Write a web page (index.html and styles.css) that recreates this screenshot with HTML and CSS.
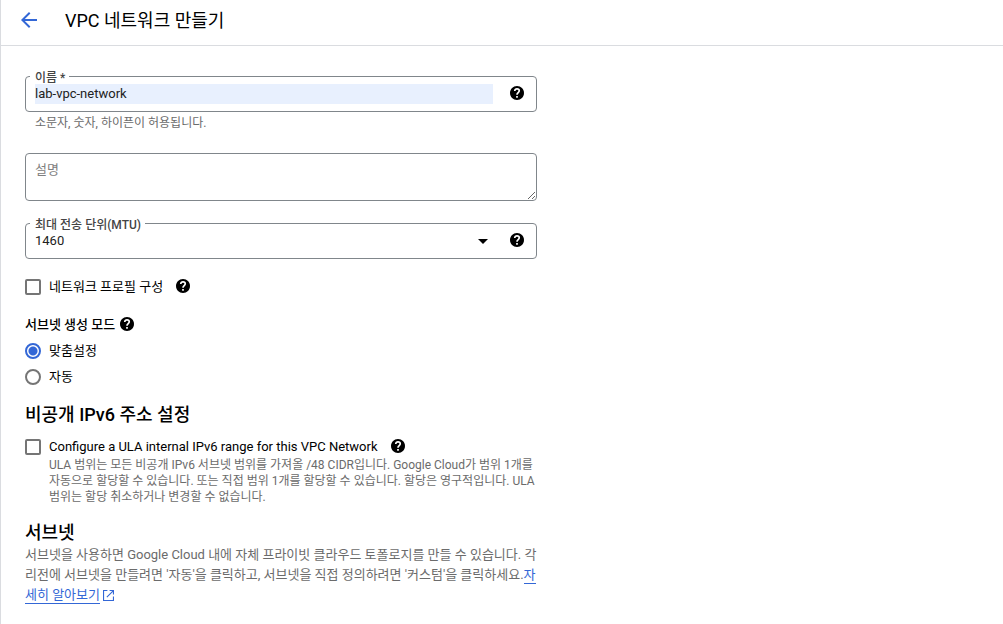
FILE: index.html
```html
<!DOCTYPE html>
<html lang="ko">
<head>
<meta charset="utf-8">
<title>VPC 네트워크 만들기</title>
<link rel="stylesheet" href="styles.css">
</head>
<body>
<svg class="sprite" aria-hidden="true">
  <symbol id="help" viewBox="2 2 20 20"><path d="M12 2C6.480 2 2 6.480 2 12s4.480 10 10 10 10-4.480 10-10S17.520 2 12 2z"/><path class="help-mark" d="M8.800 9.200c0-1.900 1.400-3.200 3.200-3.200s3.200 1.200 3.200 2.900c0 2.500-3.200 2.600-3.200 5.600M12 16.400v2.300"/></symbol>
</svg>
<header class="topbar">
  <button class="back" type="button" aria-label="뒤로">
    <svg class="back-icon" viewBox="4 4 16 16"><path d="M20 11H7.830l5.590-5.590L12 4l-8 8 8 8 1.410-1.410L7.830 13H20z"/></svg>
  </button>
  <h1 class="title">VPC 네트워크 만들기</h1>
</header>
<main class="form">
  <div class="field">
    <label class="field-label" for="name">이름 *</label>
    <input class="field-control autofilled" id="name" type="text" value="lab-vpc-network">
    <button class="help field-help" type="button" aria-label="이름 도움말"><svg><use href="#help"/></svg></button>
  </div>
  <p class="hint">소문자, 숫자, 하이픈이 허용됩니다.</p>
  <textarea class="description" placeholder="설명" aria-label="설명"></textarea>
  <div class="field">
    <label class="field-label" for="mtu">최대 전송 단위(MTU)</label>
    <select class="field-control" id="mtu"><option>1460</option></select>
    <svg class="caret" viewBox="0 0 10 5"><path d="M0 0h10L5 5z"/></svg>
    <button class="help field-help" type="button" aria-label="MTU 도움말"><svg><use href="#help"/></svg></button>
  </div>
  <div class="choice profile">
    <input class="box" id="profile" type="checkbox">
    <label for="profile">네트워크 프로필 구성</label>
    <button class="help choice-help" type="button" aria-label="네트워크 프로필 도움말"><svg><use href="#help"/></svg></button>
  </div>
  <div class="modes" role="radiogroup" aria-labelledby="mode-title">
    <div class="mode-head">
      <h3 class="mode-title" id="mode-title">서브넷 생성 모드</h3>
      <button class="help" type="button" aria-label="서브넷 생성 모드 도움말"><svg><use href="#help"/></svg></button>
    </div>
    <div class="choice"><input class="radio" id="custom" type="radio" name="mode" checked><label for="custom">맞춤설정</label></div>
    <div class="choice"><input class="radio" id="auto" type="radio" name="mode"><label for="auto">자동</label></div>
  </div>
  <section class="section">
    <h2 class="section-title">비공개 IPv6 주소 설정</h2>
    <div class="choice ula">
      <input class="box" id="ula" type="checkbox" aria-describedby="ula-note">
      <label for="ula">Configure a ULA internal IPv6 range for this VPC Network</label>
      <button class="help choice-help" type="button" aria-label="ULA 도움말"><svg><use href="#help"/></svg></button>
    </div>
    <p class="note" id="ula-note">ULA 범위는 모든 비공개 IPv6 서브넷 범위를 가져올 /48 CIDR입니다. Google Cloud가 범위 1개를 자동으로 할당할 수 있습니다. 또는 직접 범위 1개를 할당할 수 있습니다. 할당은 영구적입니다. ULA 범위는 할당 취소하거나 변경할 수 없습니다.</p>
  </section>
  <section class="section subnets">
    <h2 class="section-title">서브넷</h2>
    <p class="body-text">서브넷을 사용하면 Google Cloud 내에 자체 프라이빗 클라우드 토폴로지를 만들 수 있습니다. 각 리전에 서브넷을 만들려면 '자동'을 클릭하고, 서브넷을 직접 정의하려면 '커스텀'을 클릭하세요.<a class="link" href="#learn">자세히 알아보기</a><svg class="external" viewBox="0 0 10 10"><path d="M4 .5H.5v9h9V6M6 .5h3.500V4M9.500.5 3.500 6.500"/></svg></p>
  </section>
</main>
</body>
</html>
```
FILE: styles.css
```css
* {
  box-sizing: border-box;
}

body {
  margin: 0;
  min-height: 100vh;
  border-left: 1px solid #dadce0;
  background: #fff;
  color: #000;
  font: 400 13px/20px Roboto, "Noto Sans CJK KR", sans-serif;
}

h1, h2, h3, p {
  margin: 0;
}

button {
  padding: 0;
  border: 0;
  background: none;
}

.sprite {
  position: absolute;
  width: 0;
  height: 0;
}

.topbar {
  display: flex;
  align-items: center;
  gap: 28px;
  height: 46px;
  padding: 0 20px 6px;
  border-bottom: 1px solid #dadce0;
}

.back {
  display: flex;
}

.back-icon {
  width: 16px;
  height: 16px;
  fill: #3367d6;
}

.title {
  padding-top: 2px;
  font-size: 18px;
  font-weight: 400;
  line-height: 24px;
}

.form {
  max-width: 560px;
  padding: 30px 24px 20px;
}

.field {
  position: relative;
  display: flex;
  align-items: center;
  height: 36px;
  padding: 0 12px 0 9px;
  border: 1px solid #80868b;
  border-radius: 4px;
}

.field-label {
  position: absolute;
  top: -5px;
  left: 4px;
  padding: 0 4px 0 5px;
  background: #fff;
  color: #444;
  font-size: 12px;
  font-weight: 500;
  line-height: 12px;
}

.field-control {
  flex: 1;
  min-width: 0;
  height: 20px;
  padding: 0;
  border: 0;
  appearance: none;
  background: none;
  color: #212121;
  font: inherit;
}

.autofilled {
  background: #e8f0fe;
}

.help {
  display: flex;
  padding-bottom: 2px;
}

.help svg {
  width: 14px;
  height: 14px;
}

.help-mark {
  fill: none;
  stroke: #fff;
  stroke-width: 2.4;
}

.field-help {
  margin-left: 17px;
}

.caret {
  width: 10px;
  height: 5px;
  margin-right: 5px;
}

.hint {
  padding: 3px 10px 0;
  color: #6b6b6b;
  font-size: 12px;
  line-height: 16px;
}

.description {
  display: block;
  width: 100%;
  height: 48px;
  margin: 22px 0;
  padding: 6px 9px;
  border: 1px solid #80868b;
  border-radius: 4px;
  resize: vertical;
  font: inherit;
}

.description::placeholder {
  color: #808080;
}

.choice {
  display: flex;
  align-items: center;
  gap: 8px;
  height: 26px;
}

.choice input {
  flex: none;
  width: 16px;
  height: 16px;
  margin: 0;
  border: 2px solid #757575;
  appearance: none;
}

.choice .box {
  border-radius: 2px;
}

.choice .radio {
  border-radius: 50%;
}

.choice .radio:checked {
  border-color: #3367d6;
  background: radial-gradient(circle, #3367d6 4px, #fff 5px);
}

.choice-help {
  margin-left: 5px;
}

.profile {
  margin-top: 15px;
}

.modes {
  margin-top: 13px;
}

.mode-head {
  display: flex;
  align-items: center;
  gap: 5px;
  height: 24px;
  margin-bottom: 1px;
}

.mode-title {
  font-size: 13px;
  font-weight: 500;
}

.section {
  margin-top: 13px;
}

.subnets {
  margin-top: 16px;
}

.section-title {
  font-size: 18px;
  font-weight: 500;
  line-height: 24px;
}

.ula {
  height: 20px;
  margin-top: 10px;
}

.note {
  padding-left: 24px;
  color: #6b6b6b;
  font-size: 12px;
  line-height: 16px;
}

.body-text {
  color: #6b6b6b;
}

.link {
  padding-bottom: 1px;
  border-bottom: 1px solid #3367d6;
  color: #3367d6;
  text-decoration: none;
}

.external {
  width: 11px;
  height: 11px;
  margin-left: 3px;
  vertical-align: -2px;
  fill: none;
  stroke: #3367d6;
}
```
